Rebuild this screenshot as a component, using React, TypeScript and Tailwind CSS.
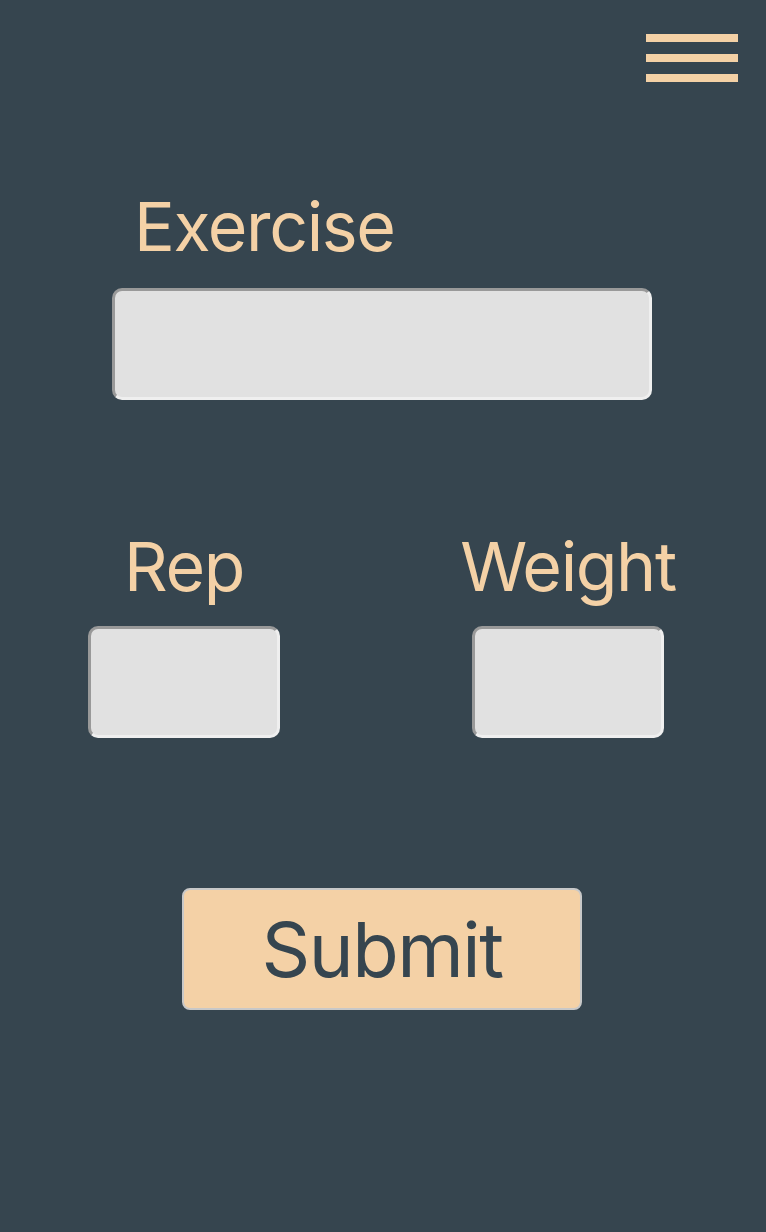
const inputCls =
  "bg-[#e1e1e1] rounded-[10px] border-[3px] border-t-[#999999] border-l-[#999999] border-b-[#efefef] border-r-[#efefef] outline-none";

export default function App() {
  return (
    <div
      className="min-h-[1232px] w-full bg-[#36454f] text-[#f4d1a6]"
      style={{ fontFamily: "Inter, 'Noto Sans', sans-serif" }}
    >
      {/* top bar */}
      <div className="flex justify-end pt-[34px] pr-[28px]">
        <button className="flex flex-col gap-[12px]" aria-label="menu">
          <span className="block w-[92px] h-[8px] bg-[#f4d1a6]" />
          <span className="block w-[92px] h-[8px] bg-[#f4d1a6]" />
          <span className="block w-[92px] h-[8px] bg-[#f4d1a6]" />
        </button>
      </div>

      {/* exercise */}
      <div className="flex flex-col pl-[112px] mt-[110px]">
        <label className="pl-[22px] text-[68px] leading-none tracking-[-0.02em]">Exercise</label>
        <input className={`${inputCls} w-[540px] h-[112px] mt-[28px]`} />
      </div>

      {/* rep & weight */}
      <div className="flex mt-[132px] pl-[88px] gap-[192px]">
        <div className="flex flex-col items-center w-[192px]">
          <label className="text-[68px] leading-none tracking-[-0.02em]">Rep</label>
          <input className={`${inputCls} w-[192px] h-[112px] mt-[26px]`} />
        </div>
        <div className="flex flex-col items-center w-[192px]">
          <label className="text-[68px] leading-none tracking-[-0.02em]">Weight</label>
          <input className={`${inputCls} w-[192px] h-[112px] mt-[26px]`} />
        </div>
      </div>

      {/* submit */}
      <div className="flex justify-center mt-[150px] pr-[2px]">
        <button className="w-[400px] h-[122px] bg-[#f4d1a6] text-[#36454f] text-[76px] tracking-[-0.02em] rounded-[8px] border-2 border-[#c8c8c8]">
          Submit
        </button>
      </div>
    </div>
  );
}
